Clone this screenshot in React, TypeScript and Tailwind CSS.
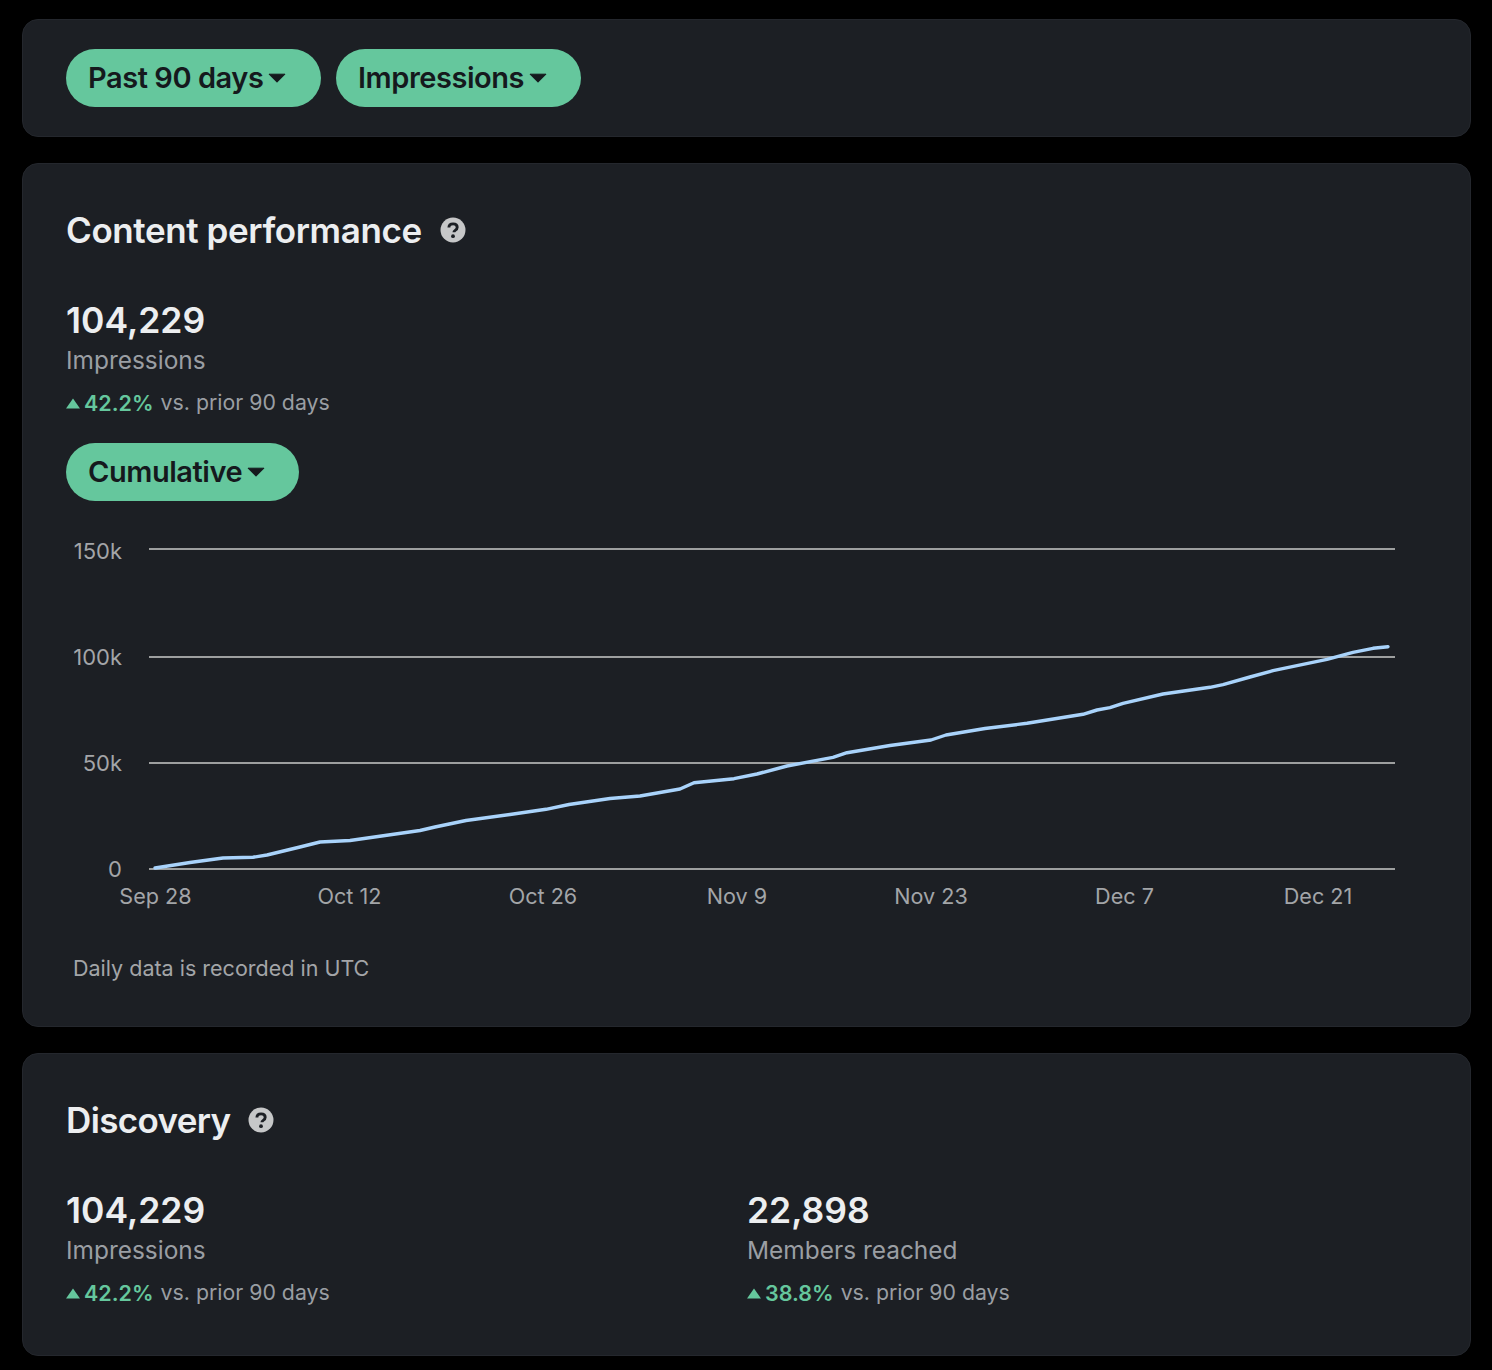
const pts = "155,868 190,862.5 223,858 253,857.3 267,855 300,847 320,842 350,840.5 385,835.5 420,830.5 435,827 466,820.5 510,814.5 546,809.3 569,804.5 610,798.5 640,796 680,789 694,782.7 734,778.7 757,774 787,766 833,757.3 847,752.7 890,745.5 931,740 946,735 985,728.5 1027,723.3 1083,714.3 1097,710 1110,707.7 1123,703.3 1163,694 1210,687.3 1223,684.7 1250,677 1273,670.7 1327,659.3 1353,652.3 1373,648.3 1388,646.7";

function Caret() {
  return (
    <svg width="18" height="10" viewBox="0 0 18 10" className="shrink-0 ml-[-1px]">
      <path d="M1 1.2h16L9 9.2z" fill="#15191d" stroke="#15191d" strokeWidth="1" strokeLinejoin="round" />
    </svg>
  );
}

function Pill({ label, w }: { label: string; w: string }) {
  return (
    <button className={`h-[58px] rounded-full bg-[#65c79d] pl-[22px] flex items-center gap-[6px] text-[#15191d] text-[29px] font-semibold tracking-[-0.45px] ${w}`}>
      <span>{label}</span>
      <Caret />
    </button>
  );
}

function Help() {
  return (
    <svg width="26" height="26" viewBox="0 0 26 26" className="shrink-0">
      <circle cx="13" cy="13" r="12.5" fill="#c6c7c8" />
      <path d="M8.9 10.6c0-2.3 1.8-3.7 4.2-3.7s4.1 1.3 4.1 3.4c0 1.6-.9 2.4-2 3.1-.9.6-1.3 1-1.3 1.9" fill="none" stroke="#1c1f24" strokeWidth="2.9" />
      <circle cx="13" cy="19.2" r="1.9" fill="#1c1f24" />
    </svg>
  );
}

function Metric({ value, label, delta }: { value: string; label: string; delta: string }) {
  return (
    <div>
      <div className="text-[35.5px] leading-[44px] font-semibold text-[#eceef0]">{value}</div>
      <div className="text-[24.45px] leading-[36px] text-[#9a9ea3] mt-[-1px]">{label}</div>
      <div className="flex items-center h-[30px] mt-[10px] text-[21.5px] text-[#9a9ea3]">
        <svg width="14" height="11" viewBox="0 0 14 11" className="mr-[4px] shrink-0">
          <path d="M7 0.5L14 10.5H0z" fill="#65c79d" />
        </svg>
        <span className="font-semibold text-[#65c79d]">{delta}</span>
        <span className="ml-[7px] text-[21.3px]">vs. prior 90 days</span>
      </div>
    </div>
  );
}

function Chart() {
  const grid = [
    [549, "150k"],
    [657, "100k"],
    [763, "50k"],
    [869, "0"],
  ] as const;
  const xs = [
    [155.5, "Sep 28"],
    [349.5, "Oct 12"],
    [543, "Oct 26"],
    [737, "Nov 9"],
    [931, "Nov 23"],
    [1124.5, "Dec 7"],
    [1318, "Dec 21"],
  ] as const;
  return (
    <svg width="1340" height="390" viewBox="66 530 1340 390" className="block">
      {grid.map(([y, t]) => (
        <g key={t}>
          <line x1="149" x2="1395" y1={y} y2={y} stroke="#c9cbc9" strokeWidth="1.5" />
          <text x="122" y={y + (y === 549 ? 10 : 8)} textAnchor="end" fill="#a3a5a8" fontSize="22" fontFamily="Inter, sans-serif">{t}</text>
        </g>
      ))}
      {xs.map(([x, t]) => (
        <text key={t} x={x} y="904" textAnchor="middle" fill="#a3a5a8" fontSize="21.6" fontFamily="Inter, sans-serif">{t}</text>
      ))}
      <polyline points={pts} fill="none" stroke="#a9d3fb" strokeWidth="3.4" strokeLinecap="round" strokeLinejoin="round" />
    </svg>
  );
}

export default function App() {
  return (
    <div className="w-[1492px] h-[1370px] bg-black px-[22px] pt-[19px] font-['Inter',sans-serif] overflow-hidden">
      <div className="w-[1449px] flex flex-col gap-[26px]">
        <section className="h-[118px] rounded-[16px] bg-[#1c1f24] border border-[#24272d] pl-[43px] pt-[29px] flex gap-[15px]">
          <Pill label="Past 90 days" w="w-[255px]" />
          <Pill label="Impressions" w="w-[245px]" />
        </section>

        <section className="h-[864px] rounded-[16px] bg-[#1c1f24] border border-[#24272d] pl-[43px] pt-[42px]">
          <div className="flex items-center gap-[18px] h-[48px]">
            <h2 className="text-[35px] font-semibold text-[#eceef0] tracking-[-0.4px]">Content performance</h2>
            <Help />
          </div>
          <div className="mt-[45px]">
            <Metric value="104,229" label="Impressions" delta="42.2%" />
          </div>
          <div className="mt-[25px]">
            <Pill label="Cumulative" w="w-[233px]" />
          </div>
          <div className="mt-[29px]">
            <Chart />
          </div>
          <p className="ml-[7px] mt-[32px] text-[21.5px] text-[#a3a5a8]">Daily data is recorded in UTC</p>
        </section>

        <section className="h-[303px] rounded-[16px] bg-[#1c1f24] border border-[#24272d] pl-[43px] pt-[42px]">
          <div className="flex items-center gap-[17px] h-[48px]">
            <h2 className="text-[35px] font-semibold text-[#eceef0] tracking-[-0.65px]">Discovery</h2>
            <Help />
          </div>
          <div className="mt-[45px] grid grid-cols-[681px_1fr]">
            <Metric value="104,229" label="Impressions" delta="42.2%" />
            <Metric value="22,898" label="Members reached" delta="38.8%" />
          </div>
        </section>
      </div>
    </div>
  );
}
